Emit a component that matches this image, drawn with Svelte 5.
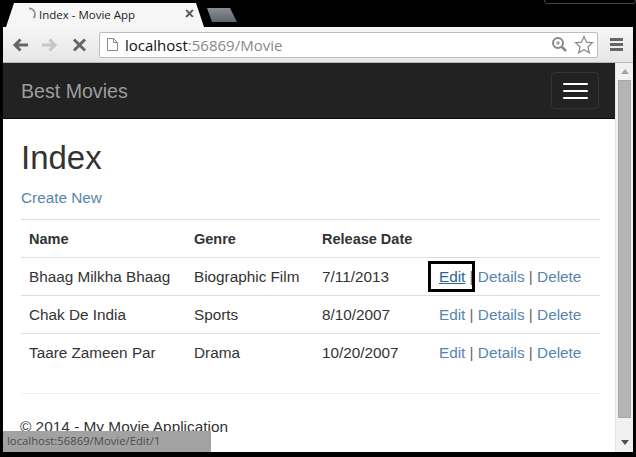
<script lang="ts">
  const movies = [
    { name: 'Bhaag Milkha Bhaag', genre: 'Biographic Film', date: '7/11/2013' },
    { name: 'Chak De India', genre: 'Sports', date: '8/10/2007' },
    { name: 'Taare Zameen Par', genre: 'Drama', date: '10/20/2007' },
  ];
</script>

<div class="screen">
  <div class="tabstrip">
    <div class="tab">
      <svg class="spinner" width="14" height="14" viewBox="0 0 14 14">
        <path d="M6 1.500a5.500 5.500 0 0 1 6 5.500 5.500 5.500 0 0 1-1.500 4" fill="none" stroke="#9a9a9a" stroke-width="2" />
      </svg>
      <span class="tab-title">Index - Movie App</span>
      <span class="tab-close">×</span>
    </div>
    <div class="new-tab"></div>
    <div class="window-btns"></div>
  </div>

  <div class="window">
    <div class="toolbar">
      <svg class="nav-icon" width="20" height="16" viewBox="0 0 20 16">
        <path d="M17 8H5M9.500 2.500 4 8l5.500 5.500" fill="none" stroke="#666" stroke-width="3" />
      </svg>
      <svg class="nav-icon" width="20" height="16" viewBox="0 0 20 16">
        <path d="M3 8h13M10.500 2.500 16 8l-5.500 5.500" fill="none" stroke="#c6c6c6" stroke-width="3" />
      </svg>
      <svg class="nav-icon" width="20" height="16" viewBox="0 0 20 16">
        <path d="M7 2.500l11 11M18 2.500l-11 11" fill="none" stroke="#666" stroke-width="3" />
      </svg>
      <div class="omnibox">
        <svg width="13" height="15" viewBox="0 0 13 15">
          <path d="M1.500 1.500h6l4 4v8h-10zM7.500 1.500v4h4" fill="#fff" stroke="#8a8a8a" />
        </svg>
        <span class="url"><b>localhost</b>:56869/Movie</span>
        <svg class="zoom-icon" width="17" height="17" viewBox="0 0 17 17">
          <circle cx="7" cy="7" r="5" fill="none" stroke="#888" stroke-width="2" />
          <path d="M10.500 10.500 15 15" stroke="#888" stroke-width="2.500" />
          <path d="M5 7h4M7 5v4" stroke="#888" />
        </svg>
        <svg width="20" height="20" viewBox="0 0 20 20">
          <path d="M10 1.500l2.500 5.700 6 .6-4.500 4 1.300 6L10 14.700l-5.300 3.100 1.300-6-4.500-4 6-.6z" fill="#fff" stroke="#888" stroke-width="1.200" />
        </svg>
      </div>
      <div class="menu-icon"><i></i><i></i><i></i></div>
    </div>

    <div class="viewport">
      <div class="page">
        <nav class="navbar">
          <span class="brand">Best Movies</span>
          <div class="burger"><i></i><i></i><i></i></div>
        </nav>

        <main class="content">
          <h1>Index</h1>
          <p class="create"><a href="#top">Create New</a></p>
          <table>
            <thead>
              <tr>
                <th class="c-name">Name</th>
                <th class="c-genre">Genre</th>
                <th class="c-date">Release Date</th>
                <th></th>
              </tr>
            </thead>
            <tbody>
              {#each movies as movie, i}
                <tr>
                  <td>{movie.name}</td>
                  <td>{movie.genre}</td>
                  <td>{movie.date}</td>
                  <td class="actions">
                    <span class="edit-wrap" class:focused={i === 0}><a href="#top" class:hover={i === 0}>Edit</a></span> | <a href="#top">Details</a> | <a href="#top">Delete</a>
                  </td>
                </tr>
              {/each}
            </tbody>
          </table>
          <hr />
          <footer>© 2014 - My Movie Application</footer>
        </main>
      </div>

      <div class="scrollbar">
        <span class="arrow up"></span>
        <div class="thumb"></div>
        <span class="arrow down"></span>
      </div>

      <div class="status">localhost:56869/Movie/Edit/1</div>
    </div>
  </div>
</div>

<style>
  :global(body) { margin: 0; background: #000; }

  .screen {
    width: 636px; height: 457px; overflow: hidden;
    background: #000; display: flex; flex-direction: column;
    font-family: "Liberation Sans", Arial, sans-serif;
  }

  .tabstrip { height: 27px; flex-shrink: 0; display: flex; align-items: flex-end; padding-left: 6px; position: relative; }
  .tab {
    width: 198px; height: 24px; box-sizing: border-box;
    background: #f6f6f6; border-radius: 6px 6px 0 0;
    display: flex; align-items: center; padding: 0 10px 2px 17px;
    clip-path: polygon(0 100%, 8px 0, 190px 0, 100% 100%);
  }
  .spinner { flex-shrink: 0; margin-right: 2px; }
  .tab-title { flex: 1; font-family: "Open Sans", sans-serif; font-size: 11.500px; color: #222; white-space: nowrap; }
  .tab-close { font-size: 16px; font-weight: bold; color: #555; line-height: 1; }
  .new-tab {
    width: 30px; height: 14px; margin: 0 0 5px 3px;
    background: linear-gradient(#888e94, #60656a);
    clip-path: polygon(0 0, 23px 0, 100% 100%, 5px 100%);
  }
  .window-btns {
    position: absolute; top: -1px; right: 0; width: 92px; height: 5px;
    border: 1px solid #444; border-radius: 0 0 3px 3px; box-sizing: border-box;
  }

  .window { flex: 1; min-height: 0; margin: 0 3px 5px; display: flex; flex-direction: column; background: #fff; }

  .toolbar {
    height: 36px; flex-shrink: 0; box-sizing: border-box;
    display: flex; align-items: center; padding: 0 10px 0 8px; gap: 8px;
    background: linear-gradient(#f6f6f6, #e6e6e6);
    border-bottom: 1px solid #b8b8b8;
  }
  .nav-icon { flex-shrink: 0; }
  .omnibox {
    flex: 1; height: 26px; margin: 0 4px; box-sizing: border-box;
    display: flex; align-items: center; gap: 6px; padding: 0 3px 0 6px;
    background: #fff; border: 1px solid #bdbdbd; border-radius: 2px;
  }
  .url { flex: 1; font-family: "Open Sans", sans-serif; font-size: 15px; color: #888; white-space: nowrap; }
  .url b { font-weight: normal; color: #111; }
  .menu-icon { width: 13px; display: flex; flex-direction: column; gap: 2px; }
  .menu-icon i { display: block; height: 3px; background: #666; }

  .viewport { flex: 1; min-height: 0; display: flex; position: relative; overflow: hidden; }
  .page { width: 612px; flex-shrink: 0; overflow: hidden; }
  .scrollbar {
    flex: 1; display: flex; flex-direction: column; align-items: center;
    background: #f1f1f1; border-left: 1px solid #e4e4e4;
  }
  .thumb { width: 13px; height: 338px; background: #b4b4b4; border: 1px solid #a8a8a8; box-sizing: border-box; }
  .arrow { width: 0; height: 0; border-left: 4px solid transparent; border-right: 4px solid transparent; margin: 6px 0; }
  .arrow.up { border-bottom: 5px solid #a4a4a4; }
  .arrow.down { border-top: 5px solid #505050; margin: auto 0 7px; }

  .navbar {
    height: 56px; box-sizing: border-box; background: #222;
    border-bottom: 1px solid #080808;
    display: flex; align-items: center; justify-content: space-between;
    padding: 0 16px 0 18px;
  }
  .brand { font-size: 19.600px; color: #9d9d9d; padding-top: 1px; }
  .burger {
    width: 48px; height: 37px; box-sizing: border-box;
    border: 1px solid #333; border-radius: 4px;
    display: flex; flex-direction: column; justify-content: center; align-items: center; gap: 5px;
  }
  .burger i { display: block; width: 25px; height: 2px; background: #fff; border-radius: 1px; }

  .content { padding: 0 15px 0 18px; color: #333; font-size: 15.300px; }
  h1 { margin: 0; padding-top: 18px; font-size: 33px; font-weight: 500; line-height: 41px; color: #333; }
  .create { margin: 0; padding-top: 10px; height: 41px; box-sizing: border-box; line-height: 20px; }
  a { color: #5585ae; text-decoration: none; }
  a.hover { color: #2a6496; text-decoration: underline; }

  table { width: 100%; border-collapse: collapse; table-layout: fixed; }
  th, td { height: 38px; box-sizing: border-box; padding: 0 8px; text-align: left; vertical-align: middle; white-space: nowrap; }
  th { font-weight: bold; font-size: 14.500px; }
  tr { border-top: 1px solid #ddd; }
  .c-name { width: 165px; }
  .c-genre { width: 128px; }
  .c-date { width: 117px; }
  .actions { color: #666; }
  .edit-wrap { position: relative; }
  .edit-wrap.focused::after {
    content: ""; position: absolute; left: -11px; top: -7px; right: -10px; bottom: -7px;
    border: 3px solid #000;
  }

  hr { border: 0; border-top: 1px solid #eee; margin: 21px 0 0; }
  footer { padding-top: 24px; font-size: 15.400px; line-height: 18px; color: #333; margin-left: -1px; }

  .status {
    position: absolute; left: 0; bottom: 0; width: 208px; height: 21px; box-sizing: border-box;
    background: #a2a2a2; color: #4e4e4e;
    font-family: "Open Sans", sans-serif; font-size: 11.300px; line-height: 19px; padding-left: 4px;
    white-space: nowrap;
  }
</style>
